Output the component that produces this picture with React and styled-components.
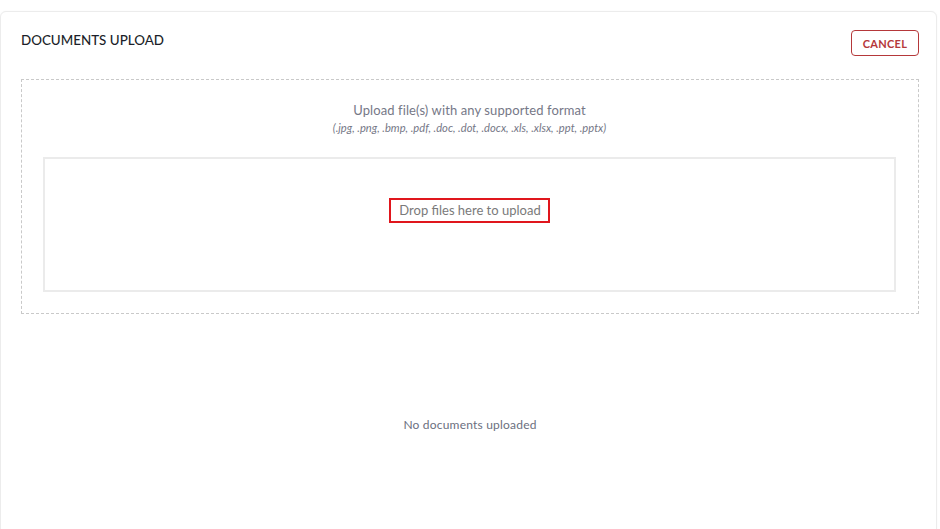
import React from "react";
import styled, { createGlobalStyle } from "styled-components";

const Global = createGlobalStyle`
  html, body { margin: 0; padding: 0; background: #ffffff; }
  body { font-family: Lato, "Open Sans", Arial, sans-serif; overflow: hidden; }
  * { box-sizing: border-box; }
`;

const Page = styled.div`
  padding: 11px 3px 0 0;
  height: 529px;
`;

const Card = styled.section`
  background: #fff;
  border: 1px solid #ececec;
  border-radius: 6px;
  padding: 18px 17px 0 20px;
  height: 560px;
  box-shadow: 0 0 2px rgba(0, 0, 0, 0.04);
`;

const Header = styled.header`
  display: flex;
  align-items: flex-start;
  justify-content: space-between;
  height: 28px;
`;

const Title = styled.h1`
  margin: 0;
  font-size: 13.4px;
  line-height: 20px;
  font-weight: 500;
  letter-spacing: 0;
  color: #1c1f2a;
`;

const CancelButton = styled.button`
  height: 26px;
  width: 68px;
  padding: 0;
  border: 1px solid #b5383a;
  border-radius: 4px;
  background: #fff;
  color: #b5383a;
  font-family: inherit;
  font-size: 11px;
  font-weight: 700;
  letter-spacing: 0.3px;
`;

const UploadZone = styled.div`
  margin-top: 21px;
  border: 1px dashed #c9c9c9;
  height: 235px;
  padding: 21px 22px 21px 21px;
  display: flex;
  flex-direction: column;
  align-items: center;
`;

const Lead = styled.p`
  margin: 0;
  font-size: 13px;
  letter-spacing: 0.1px;
  color: #767887;
  line-height: 18px;
`;

const Formats = styled.p`
  margin: 1px 0 0;
  font-size: 11.2px;
  font-style: italic;
  color: #767887;
  line-height: 16px;
`;

const DropArea = styled.div`
  align-self: stretch;
  margin-top: 21px;
  flex: 1;
  border: 2px solid #ebebeb;
  display: flex;
  justify-content: center;
  align-items: flex-start;
  padding-top: 39px;
`;

const DropLabel = styled.span`
  border: 2px solid #e0161d;
  padding: 2px 7px 3px 8px;
  font-size: 13px;
  color: #7a7a7a;
  line-height: 16px;
`;

const EmptyState = styled.p`
  margin: 103px 0 0;
  text-align: center;
  font-size: 12px;
  color: #6b6f80;
  letter-spacing: 0.2px;
`;

export default function App() {
  return (
    <>
      <Global />
      <Page>
        <Card>
          <Header>
            <Title>DOCUMENTS UPLOAD</Title>
            <CancelButton>CANCEL</CancelButton>
          </Header>
          <UploadZone>
            <Lead>Upload file(s) with any supported format</Lead>
            <Formats>(.jpg, .png, .bmp, .pdf, .doc, .dot, .docx, .xls, .xlsx, .ppt, .pptx)</Formats>
            <DropArea>
              <DropLabel>Drop files here to upload</DropLabel>
            </DropArea>
          </UploadZone>
          <EmptyState>No documents uploaded</EmptyState>
        </Card>
      </Page>
    </>
  );
}
